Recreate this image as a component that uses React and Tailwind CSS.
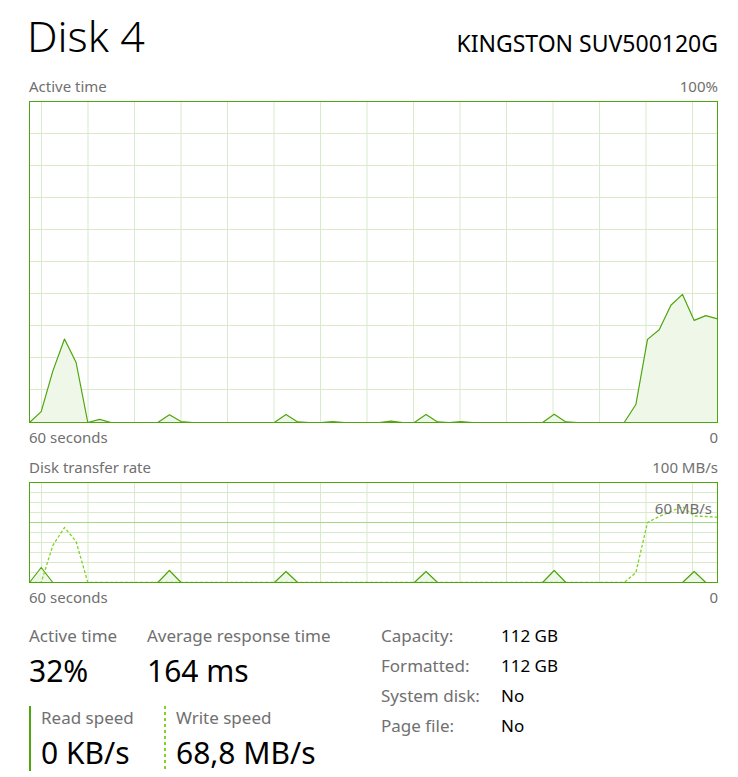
const GREEN = '#4ca60c';
const GRID = '#d9eacb';
const FILL = '#eff7e9';
const LIGHT = '#7fd321';

const STEP = 688 / 59;

function series(points) {
  const out = Array(60).fill(0);
  Object.entries(points).forEach(([i, v]) => (out[i] = v));
  return out;
}

const activeTime = series({
  1: 3.4, 2: 16, 3: 26, 4: 18.7, 6: 1, 12: 2.4, 13: 0.3, 22: 2.5, 23: 0.2, 26: 0.3,
  31: 0.4, 34: 2.5, 35: 0.2, 37: 0.3, 45: 2.6, 46: 0.2, 52: 5.6, 53: 25.9, 54: 28.9,
  55: 36.5, 56: 39.9, 57: 31.8, 58: 33.3, 59: 32.3,
});
const readRate = series({ 1: 15, 12: 12, 22: 11, 34: 11, 45: 12, 57: 11 });
const writeRate = series({
  2: 37, 3: 55, 4: 41, 52: 10, 53: 60, 54: 66, 55: 71, 56: 76, 57: 66.5, 58: 66, 59: 65.3,
});

function pts(vals, h, scale) {
  return vals
    .map((v, i) => `${(i * STEP + 0.5).toFixed(1)},${(h - 0.5 - v * scale).toFixed(1)}`)
    .join(' ');
}

function Graph({ height, rowStep, strongRow, filled, scale, dashed }) {
  const rows = [];
  for (let y = rowStep; y < height - 2; y += rowStep) rows.push(y);
  const cols = [];
  for (let k = 0; k < 15; k++) cols.push(12.5 + 46.5 * k);
  const line = pts(filled, height, scale);
  return (
    <svg width="689" height={height} viewBox={`0 0 689 ${height}`} className="block">
      {rows.map((y) => (
        <line key={'r' + y} x1="0" x2="689" y1={y + 0.5} y2={y + 0.5} stroke={GRID} strokeWidth="1" />
      ))}
      {cols.map((x) => (
        <line key={'c' + x} x1={x} x2={x} y1="0" y2={height} stroke={GRID} strokeWidth="1" />
      ))}
      {strongRow != null && (
        <line x1="0" x2="689" y1={strongRow + 0.5} y2={strongRow + 0.5} stroke="#a3d984" strokeWidth="1" />
      )}
      <polygon points={`0.5,${height - 0.5} ${line} 688.5,${height - 0.5}`} fill={FILL} />
      <polyline points={line} fill="none" stroke={GREEN} strokeWidth="1.2" strokeLinejoin="round" />
      {dashed && (
        <polyline points={pts(dashed, height, scale)} fill="none" stroke={LIGHT} strokeWidth="1.3" strokeDasharray="3 2" />
      )}
      <rect x="0.5" y="0.5" width="688" height={height - 1} fill="none" stroke={GREEN} strokeWidth="1" />
    </svg>
  );
}

function Label({ left, right }) {
  return (
    <div className="flex h-[22px] items-center justify-between text-[15px] text-[#707070]">
      <span>{left}</span>
      <span>{right}</span>
    </div>
  );
}

export default function App() {
  return (
    <div className="h-[777px] w-[738px] bg-white pl-[29px] pr-[20px] font-['Noto_Sans',sans-serif] text-black">
      <div className="flex h-[75px] items-baseline justify-between pt-[14px]">
        <h1 className="-ml-[2px] text-[43px] font-light leading-none">Disk 4</h1>
        <span className="text-[23px] leading-none">KINGSTON SUV500120G</span>
      </div>

      <Label left="Active time" right="100%" />
      <div className="mt-[4px]">
        <Graph height={322} rowStep={32} filled={activeTime} scale={321 / 100} />
      </div>
      <div className="mt-[3px]">
        <Label left="60 seconds" right="0" />
      </div>

      <div className="mt-[8px]">
        <Label left="Disk transfer rate" right="100 MB/s" />
      </div>
      <div className="relative mt-[4px]">
        <Graph height={101} rowStep={10} strongRow={40} filled={readRate} scale={1} dashed={writeRate} />
        <span className="absolute right-[6px] top-[19px] text-[15px] leading-none text-[#707070]">60 MB/s</span>
      </div>
      <div className="mt-[3px]">
        <Label left="60 seconds" right="0" />
      </div>

      <div className="mt-[16px] flex items-start">
        <div className="w-[352px]">
          <div className="flex">
            <div className="w-[118px]">
              <div className="text-[17px] leading-[24px] text-[#707070]">Active time</div>
              <div className="mt-[5px] text-[30px] leading-[36px]">32%</div>
            </div>
            <div>
              <div className="text-[17px] leading-[24px] text-[#707070]">Average response time</div>
              <div className="mt-[5px] text-[30px] leading-[36px]">164 ms</div>
            </div>
          </div>
          <div className="mt-[17px] flex">
            <div className="flex w-[135px]">
              <div className="w-[2px] bg-[#4ca60c]" />
              <div className="pl-[10px]">
                <div className="text-[17px] leading-[24px] text-[#707070]">Read speed</div>
                <div className="mt-[5px] text-[30px] leading-[36px]">0 KB/s</div>
              </div>
            </div>
            <div className="flex">
              <div className="w-[2px] bg-[repeating-linear-gradient(to_bottom,#7fd321_0_3px,transparent_3px_6px)]" />
              <div className="pl-[10px]">
                <div className="text-[17px] leading-[24px] text-[#707070]">Write speed</div>
                <div className="mt-[5px] text-[30px] leading-[36px]">68,8 MB/s</div>
              </div>
            </div>
          </div>
        </div>
        <div className="-mt-[3px] grid grid-cols-[120px_auto] content-start text-[17px] leading-[30px]">
          <span className="text-[#707070]">Capacity:</span>
          <span>112 GB</span>
          <span className="text-[#707070]">Formatted:</span>
          <span>112 GB</span>
          <span className="text-[#707070]">System disk:</span>
          <span>No</span>
          <span className="text-[#707070]">Page file:</span>
          <span>No</span>
        </div>
      </div>
    </div>
  );
}
